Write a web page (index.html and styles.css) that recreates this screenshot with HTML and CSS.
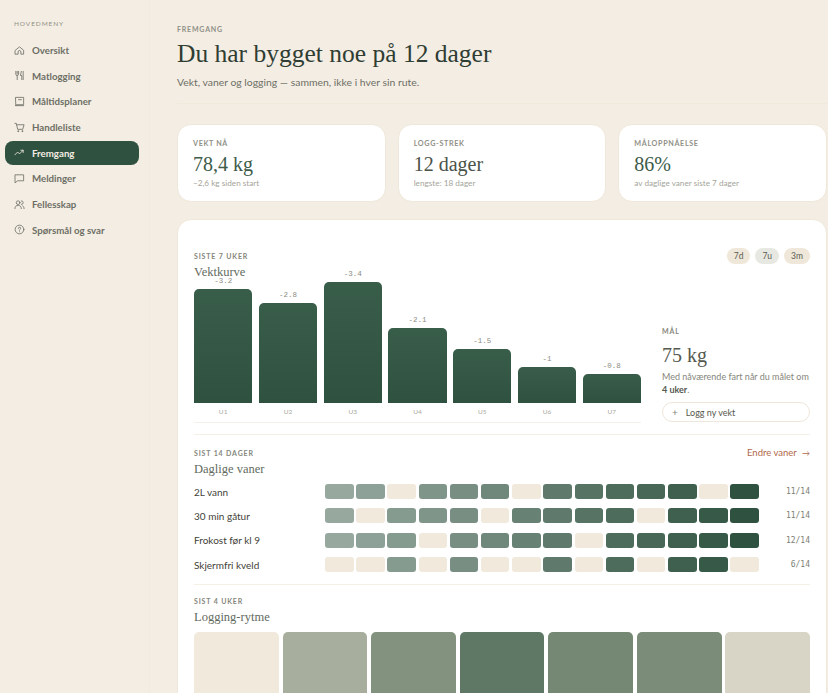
FILE: index.html
```html
<!DOCTYPE html>
<html lang="no">
<head>
    <meta charset="UTF-8">
    <meta name="viewport" content="width=device-width, initial-scale=1.0">
    <title>Fremgang</title>
    <link rel="stylesheet" href="styles.css">
</head>
<body>
    <div class="app">
        <aside class="sidebar">
            <div class="nav-title">HOVEDMENY</div>
            <nav class="nav">
                <a class="nav-item">
                    <svg class="nav-icon" viewBox="0 0 24 24"><path d="M3 11.5 12 4l9 7.500V20h-6v-5a3 3 0 0 0-6 0v5H3z"></path></svg>
                    Oversikt
                </a>
                <a class="nav-item">
                    <svg class="nav-icon" viewBox="0 0 24 24"><path d="M4 3v6a3 3 0 0 0 3 3v9M7 3v5M10 3v6a3 3 0 0 1-3 3M16 3l-2 9h3v9M20 3v18"></path></svg>
                    Matlogging
                </a>
                <a class="nav-item">
                    <svg class="nav-icon" viewBox="0 0 24 24"><path d="M4 3h17v16H6a2 2 0 0 0-2 2zM4 21h17M10 8h6"></path></svg>
                    Måltidsplaner
                </a>
                <a class="nav-item">
                    <svg class="nav-icon" viewBox="0 0 24 24"><path d="M2 3h3l3 13h11l3-10H6"></path><circle cx="9" cy="20" r="1"></circle><circle cx="18" cy="20" r="1"></circle></svg>
                    Handleliste
                </a>
                <a class="nav-item active">
                    <svg class="nav-icon" viewBox="0 0 24 24"><path d="M2 17l6-6 4 4 8-8M15 7h5v5"></path></svg>
                    Fremgang
                </a>
                <a class="nav-item">
                    <svg class="nav-icon" viewBox="0 0 24 24"><path d="M3 4h18v13H8l-5 4z"></path></svg>
                    Meldinger
                </a>
                <a class="nav-item">
                    <svg class="nav-icon" viewBox="0 0 24 24"><circle cx="9" cy="8" r="4"></circle><path d="M2 21c0-5 3-7 7-7s7 2 7 7M16 4a4 4 0 0 1 0 8M19 15c2 1 3 3 3 6"></path></svg>
                    Fellesskap
                </a>
                <a class="nav-item">
                    <svg class="nav-icon" viewBox="0 0 24 24"><circle cx="12" cy="12" r="9.500"></circle><path d="M9.500 9.500a2.500 2.500 0 1 1 3.500 2.300c-.7.3-1 .8-1 1.700M12 17v.1"></path></svg>
                    Spørsmål og svar
                </a>
            </nav>
        </aside>

        <main class="main">
            <header class="page-head">
                <div class="eyebrow">FREMGANG</div>
                <h1>Du har bygget noe på 12 dager</h1>
                <p class="lead">Vekt, vaner og logging — sammen, ikke i hver sin rute.</p>
            </header>

            <section class="stats">
                <div class="stat">
                    <div class="stat-label">VEKT NÅ</div>
                    <div class="stat-value green">78,4 kg</div>
                    <div class="stat-note">−2,6 kg siden start</div>
                </div>
                <div class="stat">
                    <div class="stat-label">LOGG-STREK</div>
                    <div class="stat-value">12 dager</div>
                    <div class="stat-note">lengste: 18 dager</div>
                </div>
                <div class="stat">
                    <div class="stat-label">MÅLOPPNÅELSE</div>
                    <div class="stat-value green">86%</div>
                    <div class="stat-note">av daglige vaner siste 7 dager</div>
                </div>
            </section>

            <section class="panel">
                <div class="weight-head">
                    <div>
                        <div class="section-label">SISTE 7 UKER</div>
                        <h2>Vektkurve</h2>
                    </div>
                    <div class="pills">
                        <span class="pill">7d</span>
                        <span class="pill current">7u</span>
                        <span class="pill">3m</span>
                    </div>
                </div>

                <div class="weight-body">
                    <div class="chart-wrap">
                        <div class="chart">
                            <div class="bar-col"><span class="bar-value">-3.2</span><div class="bar" style="height: 114px"></div></div>
                            <div class="bar-col"><span class="bar-value">-2.8</span><div class="bar" style="height: 100px"></div></div>
                            <div class="bar-col"><span class="bar-value">-3.4</span><div class="bar" style="height: 121px"></div></div>
                            <div class="bar-col"><span class="bar-value">-2.1</span><div class="bar" style="height: 75px"></div></div>
                            <div class="bar-col"><span class="bar-value">-1.5</span><div class="bar" style="height: 54px"></div></div>
                            <div class="bar-col"><span class="bar-value">-1</span><div class="bar" style="height: 36px"></div></div>
                            <div class="bar-col"><span class="bar-value">-0.8</span><div class="bar" style="height: 29px"></div></div>
                        </div>
                        <div class="chart-axis">
                            <span>U1</span><span>U2</span><span>U3</span><span>U4</span><span>U5</span><span>U6</span><span>U7</span>
                        </div>
                    </div>
                    <div class="goal">
                        <div class="section-label">MÅL</div>
                        <div class="goal-value">75 kg</div>
                        <p class="goal-text">Med nåværende fart når du målet om <b class="nowrap">4 uker</b>.</p>
                        <button class="goal-btn"><span class="plus">+</span>Logg ny vekt</button>
                    </div>
                </div>

                <div class="habits">
                    <div class="habits-head">
                        <div>
                            <div class="section-label">SIST 14 DAGER</div>
                            <h2>Daglige vaner</h2>
                        </div>
                        <a class="link">Endre vaner <span class="arrow">→</span></a>
                    </div>
                    <div class="habit">
                        <span class="habit-name">2L vann</span>
                        <div class="heat">
                            <i class="on"></i><i class="on"></i><i></i><i class="on"></i><i class="on"></i><i class="on"></i><i></i><i class="on"></i><i class="on"></i><i class="on"></i><i class="on"></i><i class="on"></i><i></i><i class="on"></i>
                        </div>
                        <span class="habit-count">11/14</span>
                    </div>
                    <div class="habit">
                        <span class="habit-name">30 min gåtur</span>
                        <div class="heat">
                            <i class="on"></i><i></i><i class="on"></i><i class="on"></i><i class="on"></i><i></i><i class="on"></i><i class="on"></i><i class="on"></i><i class="on"></i><i></i><i class="on"></i><i class="on"></i><i class="on"></i>
                        </div>
                        <span class="habit-count">11/14</span>
                    </div>
                    <div class="habit">
                        <span class="habit-name">Frokost før kl 9</span>
                        <div class="heat">
                            <i class="on"></i><i class="on"></i><i class="on"></i><i></i><i class="on"></i><i class="on"></i><i class="on"></i><i class="on"></i><i></i><i class="on"></i><i class="on"></i><i class="on"></i><i class="on"></i><i class="on"></i>
                        </div>
                        <span class="habit-count">12/14</span>
                    </div>
                    <div class="habit">
                        <span class="habit-name">Skjermfri kveld</span>
                        <div class="heat">
                            <i></i><i></i><i class="on"></i><i></i><i class="on"></i><i></i><i></i><i class="on"></i><i></i><i class="on"></i><i></i><i class="on"></i><i class="on"></i><i></i>
                        </div>
                        <span class="habit-count">6/14</span>
                    </div>
                </div>

                <div class="rhythm">
                    <div class="section-label">SIST 4 UKER</div>
                    <h2>Logging-rytme</h2>
                    <div class="rhythm-grid">
                        <div class="day lvl0"></div>
                        <div class="day lvl1"></div>
                        <div class="day lvl2"></div>
                        <div class="day lvl3"></div>
                        <div class="day lvl4"></div>
                        <div class="day lvl5"></div>
                        <div class="day lvl6"></div>
                    </div>
                </div>
            </section>
        </main>
    </div>
</body>
</html>
```

FILE: styles.css
```css
html, body {
    height: 693px;
    overflow: hidden;
}

body {
    margin: 0;
    font-family: Lato, sans-serif;
    color: #3a3d35;
    background-color: #f4ede3;
}

.app {
    display: flex;
    height: 693px;
}

/* Sidebar */
.sidebar {
    width: 150px;
    flex-shrink: 0;
    box-sizing: border-box;
    padding: 19px 10px 0 5px;
    border-right: 1px solid #f1eade;
}

.nav-title {
    padding-left: 9px;
    margin-bottom: 9px;
    font-size: 6.500px;
    letter-spacing: .9px;
    line-height: 10px;
    color: #8f9086;
}

.nav {
    display: flex;
    flex-direction: column;
    gap: 1.700px;
}

.nav-item {
    display: flex;
    align-items: center;
    gap: 7px;
    height: 24px;
    padding-left: 9px;
    border-radius: 8px;
    font-size: 9.700px;
    font-weight: 700;
    color: #6d6f66;
}

.nav-item.active {
    background-color: #2f5240;
    color: #f4ede3;
}

.nav-icon {
    width: 11px;
    height: 11px;
    flex-shrink: 0;
    fill: none;
    stroke: currentColor;
    stroke-width: 1.800;
    stroke-linecap: round;
    stroke-linejoin: round;
}

/* Main column */
.main {
    flex: 1;
    min-width: 0;
    padding: 24px 1px 0 27px;
}

.page-head {
    padding-bottom: 14px;
    margin-bottom: 20px;
    border-bottom: 1px solid #f0e9dc;
}

.eyebrow {
    font-size: 7px;
    font-weight: 700;
    letter-spacing: .8px;
    line-height: 10px;
    color: #8f9086;
}

h1 {
    margin: 3px 0 5px;
    font-family: "Liberation Serif", serif;
    font-size: 25.500px;
    font-weight: 400;
    line-height: 34px;
    color: #2f3d33;
}

.lead {
    margin: 0;
    font-size: 10.400px;
    line-height: 13px;
    color: #6d6f66;
}

.stats {
    display: grid;
    grid-template-columns: repeat(3, 1fr);
    gap: 12px;
    margin-bottom: 17px;
}

.stat {
    height: 78px;
    box-sizing: border-box;
    padding: 14px 15px 0;
    background-color: white;
    border: 1px solid #efe7d9;
    border-radius: 14px;
}

.stat-label {
    font-size: 7.200px;
    font-weight: 700;
    letter-spacing: .65px;
    line-height: 9px;
    color: #8f9086;
}

.stat-value {
    margin-top: 4px;
    font-family: "Liberation Serif", serif;
    font-size: 20px;
    line-height: 25px;
    color: #4a5248;
}

.stat-value.green {
    color: #3d5c4a;
}

.stat-note {
    margin-top: 1px;
    font-size: 8.200px;
    line-height: 10px;
    color: #a5a59a;
}

/* Big panel */
.panel {
    height: 600px;
    box-sizing: border-box;
    padding: 32px 16px 0;
    background-color: white;
    border: 1px solid #efe7d9;
    border-radius: 14px;
}

.section-label {
    margin-top: -1px;
    font-size: 7px;
    font-weight: 700;
    letter-spacing: .85px;
    line-height: 10px;
    color: #85867b;
}

h2 {
    margin: 3px 0 0;
    font-family: "Liberation Serif", serif;
    font-size: 12.500px;
    font-weight: 400;
    line-height: 16px;
    color: #5f6b60;
}

.weight-head {
    display: flex;
    justify-content: space-between;
    height: 35px;
}

.pills {
    display: flex;
    gap: 5px;
    margin-top: -4px;
}

.pill {
    height: 16px;
    padding: 0 7px;
    border-radius: 8px;
    background-color: #efe7d9;
    font-size: 8.500px;
    line-height: 16px;
    color: #5a5c52;
}

.pill.current {
    background-color: #e8e8e2;
}

.weight-body {
    display: flex;
    align-items: flex-end;
    gap: 21px;
    padding-bottom: 11px;
    border-bottom: 1px solid #f4f0e6;
}

.chart-wrap {
    width: 447px;
    flex-shrink: 0;
    border-bottom: 1px solid #f5f1e8;
}

.chart {
    display: flex;
    align-items: flex-end;
    gap: 6.500px;
    height: 113px;
    margin-top: 3px;
}

.bar-col {
    flex: 1;
    display: flex;
    flex-direction: column;
    align-items: center;
}

.bar-value {
    margin-bottom: 3px;
    font-family: "Liberation Mono", monospace;
    font-size: 7.500px;
    line-height: 9px;
    color: #8b8c82;
}

.bar {
    width: 100%;
    border-radius: 5px 5px 0 0;
    background: linear-gradient(#385d49, #2f5240);
}

.chart-axis {
    display: flex;
    gap: 6.500px;
    height: 19px;
}

.chart-axis span {
    flex: 1;
    padding-top: 4px;
    text-align: center;
    font-size: 6.500px;
    line-height: 9px;
    color: #a9a99e;
}

.goal {
    flex: 1;
    min-width: 0;
    margin-bottom: 1px;
}

.goal-value {
    margin-top: 6px;
    font-family: "Liberation Serif", serif;
    font-size: 20px;
    line-height: 26px;
    color: #55584e;
}

.goal-text {
    margin: 2px 0 6px;
    font-size: 9px;
    line-height: 13px;
    color: #85867b;
}

.goal-text b {
    color: #55584e;
}

.nowrap {
    white-space: nowrap;
}

.goal-btn {
    display: flex;
    align-items: center;
    width: 100%;
    height: 20px;
    padding: 0 0 0 9px;
    background-color: white;
    border: 1px solid #efe7d9;
    border-radius: 10px;
    font-family: inherit;
    font-size: 9px;
    color: #55584e;
}

.plus {
    margin-right: 8px;
    font-size: 10px;
    line-height: 10px;
    color: #85867b;
}

.habits {
    padding-top: 14px;
    padding-bottom: 7px;
    border-bottom: 1px solid #f4f0e6;
}

.habits-head {
    display: flex;
    justify-content: space-between;
    margin-bottom: 2.500px;
}

.link {
    margin-top: -1px;
    font-size: 9.500px;
    line-height: 10px;
    color: #b0694a;
}

.arrow {
    margin-left: 3px;
    font-size: 8px;
}

.habit {
    display: flex;
    align-items: center;
    height: 24.300px;
}

.habit-name {
    width: 131px;
    flex-shrink: 0;
    font-size: 10px;
    color: #3f4239;
}

.heat {
    display: grid;
    grid-template-columns: repeat(14, 1fr);
    gap: 2.700px;
    width: 434px;
    flex-shrink: 0;
}

.heat i {
    height: 15px;
    border-radius: 3px;
    background-color: #f0e9dc;
}

.heat .on {
    background-color: #2f5240;
}

.heat .on:nth-child(1) { opacity: .5; }
.heat .on:nth-child(2) { opacity: .54; }
.heat .on:nth-child(3) { opacity: .58; }
.heat .on:nth-child(4) { opacity: .61; }
.heat .on:nth-child(5) { opacity: .65; }
.heat .on:nth-child(6) { opacity: .69; }
.heat .on:nth-child(7) { opacity: .73; }
.heat .on:nth-child(8) { opacity: .77; }
.heat .on:nth-child(9) { opacity: .81; }
.heat .on:nth-child(10) { opacity: .85; }
.heat .on:nth-child(11) { opacity: .88; }
.heat .on:nth-child(12) { opacity: .92; }
.heat .on:nth-child(13) { opacity: .96; }

.habit-count {
    flex: 1;
    text-align: right;
    font-family: "DejaVu Sans Mono", monospace;
    font-size: 8px;
    color: #7d7e74;
}

.rhythm {
    padding-top: 12px;
}

.rhythm-grid {
    display: grid;
    grid-template-columns: repeat(7, 1fr);
    gap: 3.600px;
    margin-top: 7.500px;
}

.day {
    aspect-ratio: 1;
    border-radius: 5px;
}

.lvl0 { background-color: #f0e9dc; }
.lvl1 { background-color: #a8ae9e; }
.lvl2 { background-color: #82927f; }
.lvl3 { background-color: #5f7865; }
.lvl4 { background-color: #758873; }
.lvl5 { background-color: #7b8d79; }
.lvl6 { background-color: #d8d5c6; }
```
